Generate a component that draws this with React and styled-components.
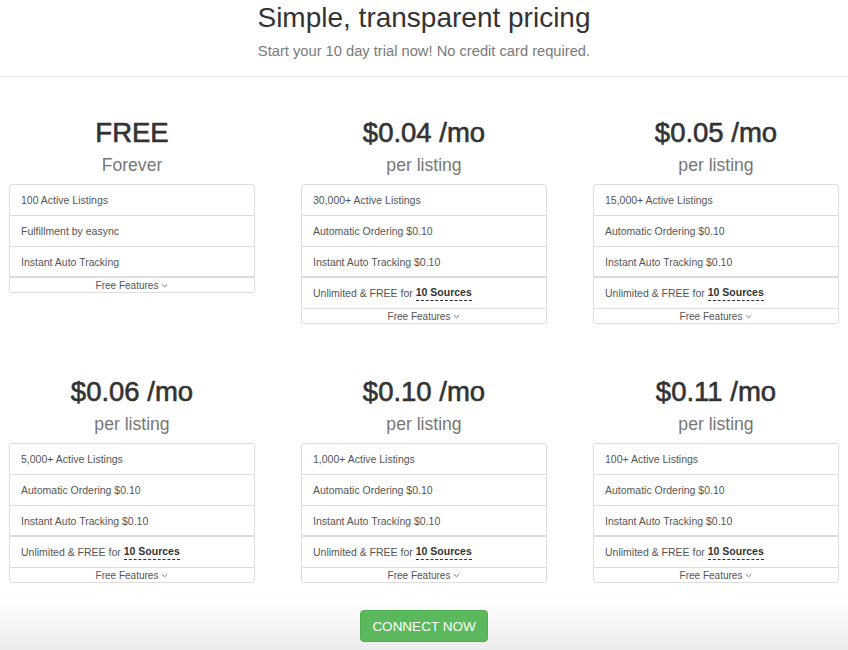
import React from "react";
import styled, { createGlobalStyle } from "styled-components";

const GlobalStyle = createGlobalStyle`
  html, body {
    margin: 0;
    padding: 0;
    background: #fff;
  }
  body {
    font-family: "Liberation Sans", Arial, Helvetica, sans-serif;
    color: #333;
  }
  * { box-sizing: border-box; }
`;

const Page = styled.div`
  width: 848px;
  min-height: 650px;
  display: flex;
  flex-direction: column;
`;

const Header = styled.header`
  text-align: center;
  padding-top: 2px;
  height: 77px;
  border-bottom: 1px solid #e7e7e7;
`;

const Title = styled.h1`
  margin: 0;
  font-size: 28px;
  line-height: 32px;
  font-weight: normal;
  color: #333;
`;

const Subtitle = styled.p`
  margin: 8px 0 0;
  font-size: 14.7px;
  line-height: 18px;
  color: #7a7a7a;
`;

const Plans = styled.section`
  display: grid;
  grid-template-columns: repeat(3, 246px);
  column-gap: 46px;
  row-gap: 52px;
  align-items: start;
  padding: 40px 9px 0;
`;

const Plan = styled.div`
  display: flex;
  flex-direction: column;
  align-items: stretch;
`;

const Price = styled.div`
  text-align: center;
  font-size: 27.5px;
  line-height: 32px;
  font-weight: normal;
  -webkit-text-stroke: 0.6px #333;
  color: #333;
`;

const Period = styled.div`
  text-align: center;
  margin-top: 6px;
  font-size: 17.6px;
  line-height: 20px;
  color: #777;
`;

const Card = styled.div`
  margin-top: 9px;
  border: 1px solid #ddd;
  border-radius: 3px;
  background: #fff;
`;

const Row = styled.div`
  height: ${(p) => (p.$thick ? 32 : p.$first ? 30 : 31)}px;
  padding: 0 11px;
  display: flex;
  align-items: center;
  white-space: pre;
  font-size: 10.5px;
  color: #555;
  border-top: ${(p) =>
    p.$first ? "none" : p.$thick ? "2px solid #ddd" : "1px solid #ddd"};
  &:nth-child(3) {
    height: 30px;
  }
`;

const Sources = styled.span`
  font-weight: bold;
  color: #333;
  border-bottom: 1px dashed #333;
  padding-bottom: 2px;
`;

const Toggle = styled.div`
  height: ${(p) => (p.$thick ? 16 : 15)}px;
  display: flex;
  align-items: center;
  justify-content: center;
  gap: 3px;
  font-size: 10px;
  color: #555;
  border-top: ${(p) => (p.$thick ? "2px solid #ddd" : "1px solid #ddd")};
`;

const Footer = styled.footer`
  margin-top: auto;
  padding: 26px 0 8px;
  display: flex;
  justify-content: center;
  background: linear-gradient(to bottom, #ffffff 0%, #ffffff 20%, #ececec 100%);
`;

const ConnectButton = styled.button`
  width: 128px;
  height: 32px;
  border: 1px solid #4cae4c;
  border-radius: 4px;
  background: #5cb85c;
  color: #fff;
  font-family: "Liberation Sans", Arial, sans-serif;
  font-size: 13.5px;
  letter-spacing: 0;
  cursor: pointer;
`;

const Chevron = () => (
  <svg width="7" height="5" viewBox="0 0 7 5" fill="none">
    <polyline points="0.8,1.2 3.5,3.8 6.2,1.2" stroke="#666" strokeWidth="0.9" />
  </svg>
);

const plans = [
  { price: "FREE", period: "Forever", features: ["100 Active Listings", "Fulfillment by easync", "Instant Auto Tracking"], free: true },
  { price: "$0.04 /mo", period: "per listing", features: ["30,000+ Active Listings", "Automatic Ordering $0.10", "Instant Auto Tracking $0.10"] },
  { price: "$0.05 /mo", period: "per listing", features: ["15,000+ Active Listings", "Automatic Ordering $0.10", "Instant Auto Tracking $0.10"] },
  { price: "$0.06 /mo", period: "per listing", features: ["5,000+ Active Listings", "Automatic Ordering $0.10", "Instant Auto Tracking $0.10"] },
  { price: "$0.10 /mo", period: "per listing", features: ["1,000+ Active Listings", "Automatic Ordering $0.10", "Instant Auto Tracking $0.10"] },
  { price: "$0.11 /mo", period: "per listing", features: ["100+ Active Listings", "Automatic Ordering $0.10", "Instant Auto Tracking $0.10"] },
];

export default function App() {
  return (
    <Page>
      <GlobalStyle />
      <Header>
        <Title>Simple, transparent pricing</Title>
        <Subtitle>Start your 10 day trial now! No credit card required.</Subtitle>
      </Header>
      <Plans>
        {plans.map((p) => (
          <Plan key={p.price}>
            <Price>{p.price}</Price>
            <Period>{p.period}</Period>
            <Card>
              {p.features.map((f, i) => (
                <Row key={f} $first={i === 0}>
                  {f}
                </Row>
              ))}
              {!p.free && (
                <Row $thick>
                  {"Unlimited & FREE for "}
                  <Sources>10 Sources</Sources>
                </Row>
              )}
              <Toggle $thick={p.free}>
                Free Features <Chevron />
              </Toggle>
            </Card>
          </Plan>
        ))}
      </Plans>
      <Footer>
        <ConnectButton>CONNECT NOW</ConnectButton>
      </Footer>
    </Page>
  );
}
